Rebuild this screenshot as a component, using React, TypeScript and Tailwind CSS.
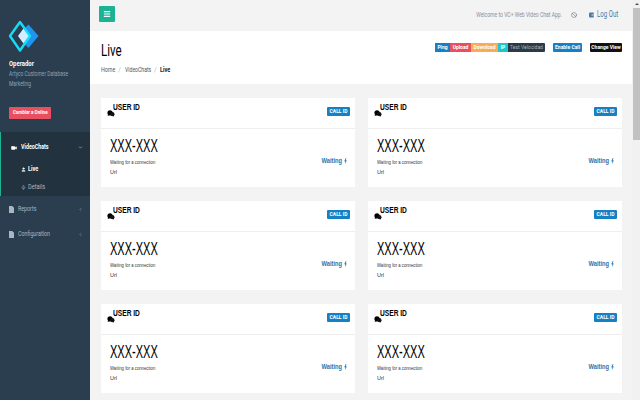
import { Menu, Ban, Video, User, Mic, ChevronDown, ChevronLeft } from "lucide-react";

const rows = [0, 1, 2];

function Logo() {
  return (
    <svg width="32" height="33" viewBox="0 0 32 33" fill="none" className="block">
      <path d="M20.5 4.5 L30.5 16 L20.5 28 L13 20 L13 12 Z" fill="#1e95ee" strokeLinejoin="round" />
      <path d="M15.5 8.5 L21.5 16 L15.5 23.5 L10 16 Z" fill="#d5eeff" />
      <path d="M12 2 L22 16 L12 30.5 L2 16 Z" stroke="#18dcf5" strokeWidth="2.4" strokeLinejoin="round" />
    </svg>
  );
}

function Chat() {
  return (
    <svg width="8" height="7" viewBox="0 0 8 7" className="mt-[12px] shrink-0">
      <circle cx="3" cy="2.8" r="2.6" fill="#000" />
      <circle cx="5.4" cy="4.2" r="2.1" fill="#111" />
      <path d="M5 5 L7 6.8 L6.8 4 Z" fill="#111" />
      <path d="M1.4 4 L0.6 6 L3 5 Z" fill="#000" />
    </svg>
  );
}

function FileIcon() {
  return (
    <svg width="5" height="7" viewBox="0 0 5 7">
      <path d="M0 0 H3.2 L5 1.8 V7 H0 Z" fill="#a9b7c2" />
    </svg>
  );
}

function Bolt() {
  return (
    <svg width="3" height="6" viewBox="0 0 3 6">
      <path d="M1.8 0 L0.2 3.2 H1.4 L1 6 L2.9 2.4 H1.7 L2.4 0 Z" fill="#2f74ac" />
    </svg>
  );
}

function Card() {
  return (
    <div className="bg-white h-[89px] flex flex-col">
      <div className="h-[31px] border-b border-[#eeeeee] flex items-start justify-between pl-[6px] pr-[6px]">
        <div className="flex items-start">
          <Chat />
          <span className="text-[8.5px] leading-none font-bold text-black ml-[-2px] mt-[5px] origin-left scale-x-[.78] whitespace-nowrap font-['Liberation_Sans',sans-serif]">USER ID</span>
        </div>
        <span className="mt-[9px] mr-[-1px] bg-[#1581c4] text-white text-[5px] font-bold rounded-[1px] h-[9px] w-[23px] flex items-center justify-center whitespace-nowrap">
          CALL ID
        </span>
      </div>
      <div className="flex-1 flex items-center justify-between pl-[9px] pr-[8px]">
        <div className="font-['Liberation_Sans',sans-serif]">
          <div className="text-[19px] leading-[24px] text-black mt-[-5px] origin-left scale-x-[.58] whitespace-nowrap">XXX-XXX</div>
          <div className="text-[5.5px] leading-[9px] text-[#333333] whitespace-nowrap origin-left scale-x-[.77]">Waiting for a connection</div>
          <div className="text-[5.5px] leading-[9px] text-[#333333] mt-[1px]">Url</div>
        </div>
        <div className="flex items-center gap-[2px] text-[#2f74ac] text-[7px] font-bold mt-[6px] font-['Liberation_Sans',sans-serif]">
          <span className="origin-right scale-x-[.82]">Waiting</span>
          <Bolt />
        </div>
      </div>
    </div>
  );
}

export default function App() {
  return (
    <div className="w-[640px] h-[400px] overflow-hidden flex font-['Roboto',sans-serif] bg-[#f3f3f3]">
      <aside className="w-[90px] shrink-0 bg-[#2a3e50] flex flex-col">
        <div className="pl-[8px] pt-[20px]">
          <Logo />
        </div>
        <div className="pl-[9px] mt-[7px]">
          <div className="text-[7px] leading-[9px] font-bold text-white origin-left scale-x-[.85]">Operador</div>
          <div className="text-[6.5px] leading-[10px] text-[#8fa3b3] whitespace-nowrap origin-left scale-x-[.76]">Artyco Customer Database</div>
          <div className="text-[6.5px] leading-[10px] text-[#8fa3b3] origin-left scale-x-[.76]">Marketing</div>
        </div>
        <div className="ml-[9px] mt-[18px] w-[42px] h-[12px] rounded-[1px] bg-[#e9505f] text-white text-[5px] font-bold flex items-center justify-center whitespace-nowrap">
          <span className="scale-x-[.9]">Cambiar a Online</span>
        </div>
        <div className="mt-[13px] h-[64px] bg-[#22323f] border-l border-[#1cb394] pl-[10px] pr-[7px]">
          <div className="h-[31px] flex items-center justify-between text-white text-[7px] font-bold">
            <div className="flex items-center gap-[4px]">
              <Video size={6} className="fill-white" />
              <span className="origin-left scale-x-[.76]">VideoChats</span>
            </div>
            <ChevronDown size={5} />
          </div>
          <div className="pl-[10px] h-[12px] flex items-center gap-[2px] text-white text-[7px] font-bold">
            <User size={5} className="fill-white" />
            <span className="origin-left scale-x-[.8]">Live</span>
          </div>
          <div className="pl-[10px] mt-[6px] h-[12px] flex items-center gap-[2px] text-[#a9b7c2] text-[7px]">
            <Mic size={5} />
            <span className="origin-left scale-x-[.8]">Details</span>
          </div>
        </div>
        <div className="h-[26px] flex items-center justify-between pl-[9px] pr-[7px] text-[#a9b7c2] text-[7px]">
          <div className="flex items-center gap-[4px]">
            <FileIcon />
            <span className="origin-left scale-x-[.76]">Reports</span>
          </div>
          <ChevronLeft size={5} />
        </div>
        <div className="h-[24px] flex items-center justify-between pl-[9px] pr-[7px] text-[#a9b7c2] text-[7px]">
          <div className="flex items-center gap-[4px]">
            <FileIcon />
            <span className="origin-left scale-x-[.76]">Configuration</span>
          </div>
          <ChevronLeft size={5} />
        </div>
      </aside>

      <main className="flex-1 min-w-0 flex flex-col">
        <header className="h-[31px] shrink-0 flex items-start justify-between pl-[9px] pr-[14px] pt-[6px] bg-[#f3f3f3]">
          <div className="w-[16px] h-[16px] bg-[#1cb394] rounded-[1px] flex items-center justify-center">
            <Menu size={8} className="text-white" strokeWidth={3.5} />
          </div>
          <div className="flex items-center h-[18px] text-[7px] text-[#8a8f94]">
            <span className="origin-right scale-x-[.72] whitespace-nowrap">Welcome to VC+ Web Video Chat App.</span>
            <Ban size={6} className="ml-[9px] text-[#666]" />
            <svg width="7" height="6" viewBox="0 0 7 6" className="ml-[12px]">
              <rect x="0" y="0.5" width="5" height="5" rx="1" fill="#4b7ba6" />
              <path d="M2.5 3 H6.5 M5 1.5 L6.5 3 L5 4.5" stroke="#ffffff" strokeWidth="0.8" fill="none" />
            </svg>
            <span className="ml-[1px] text-[9px] text-[#4b7ba6] w-[21px] whitespace-nowrap origin-left scale-x-[.68]">Log Out</span>
          </div>
        </header>

        <section className="h-[53px] shrink-0 bg-white flex justify-between pl-[11px] pr-[10px]">
          <div>
            <div className="text-[16px] leading-[18px] text-black mt-[11px] origin-left scale-x-[.72]">Live</div>
            <div className="flex items-center text-[7px] leading-[10px] mt-[5px] text-[#555555] whitespace-nowrap">
              <span className="w-[13px] origin-left scale-x-[.76]">Home</span>
              <span className="w-[4px] ml-[4px] mr-[3px] text-[#bbbbbb]">/</span>
              <span className="w-[24px] origin-left scale-x-[.73]">VideoChats</span>
              <span className="w-[4px] ml-[5px] mr-[2px] text-[#bbbbbb]">/</span>
              <span className="font-bold text-[#222222] origin-left scale-x-[.8]">Live</span>
            </div>
          </div>
          <div className="flex items-start mt-[12px] text-[5px] font-bold text-white">
            <span className="bg-[#1581c4] h-[9px] w-[15px] flex items-center justify-center">Ping</span>
            <span className="bg-[#e9505f] h-[9px] w-[21px] flex items-center justify-center">Upload</span>
            <span className="bg-[#f8ac59] h-[9px] w-[27px] flex items-center justify-center">Download</span>
            <span className="bg-[#23c6c8] h-[9px] w-[10px] flex items-center justify-center">IP</span>
            <span className="bg-[#2b3a44] h-[9px] w-[37px] flex items-center justify-center font-normal text-[#aab2b8] rounded-r-[1px] whitespace-nowrap">Test Velocidad</span>
            <span className="ml-[8px] bg-[#1581c4] h-[9px] w-[29px] flex items-center justify-center rounded-[1px] whitespace-nowrap">Enable Call</span>
            <span className="ml-[8px] bg-[#111111] h-[9px] w-[32px] flex items-center justify-center rounded-[1px] whitespace-nowrap">Change View</span>
          </div>
        </section>

        <div className="grid grid-cols-2 gap-x-[13px] gap-y-[14px] pl-[11px] pr-[10px] pt-[14px]">
          {rows.map((r) => [<Card key={`${r}-a`} />, <Card key={`${r}-b`} />])}
        </div>
      </main>

      <div className="w-[8px] shrink-0 bg-[#f1f1f1] pl-[1px] flex flex-col">
        <div className="h-[8px] flex items-center justify-center">
          <div className="w-0 h-0 border-x-[2px] border-b-[2px] border-x-transparent border-b-[#505050]" />
        </div>
        <div className="h-[132px] bg-[#c1c1c1]" />
      </div>
    </div>
  );
}
